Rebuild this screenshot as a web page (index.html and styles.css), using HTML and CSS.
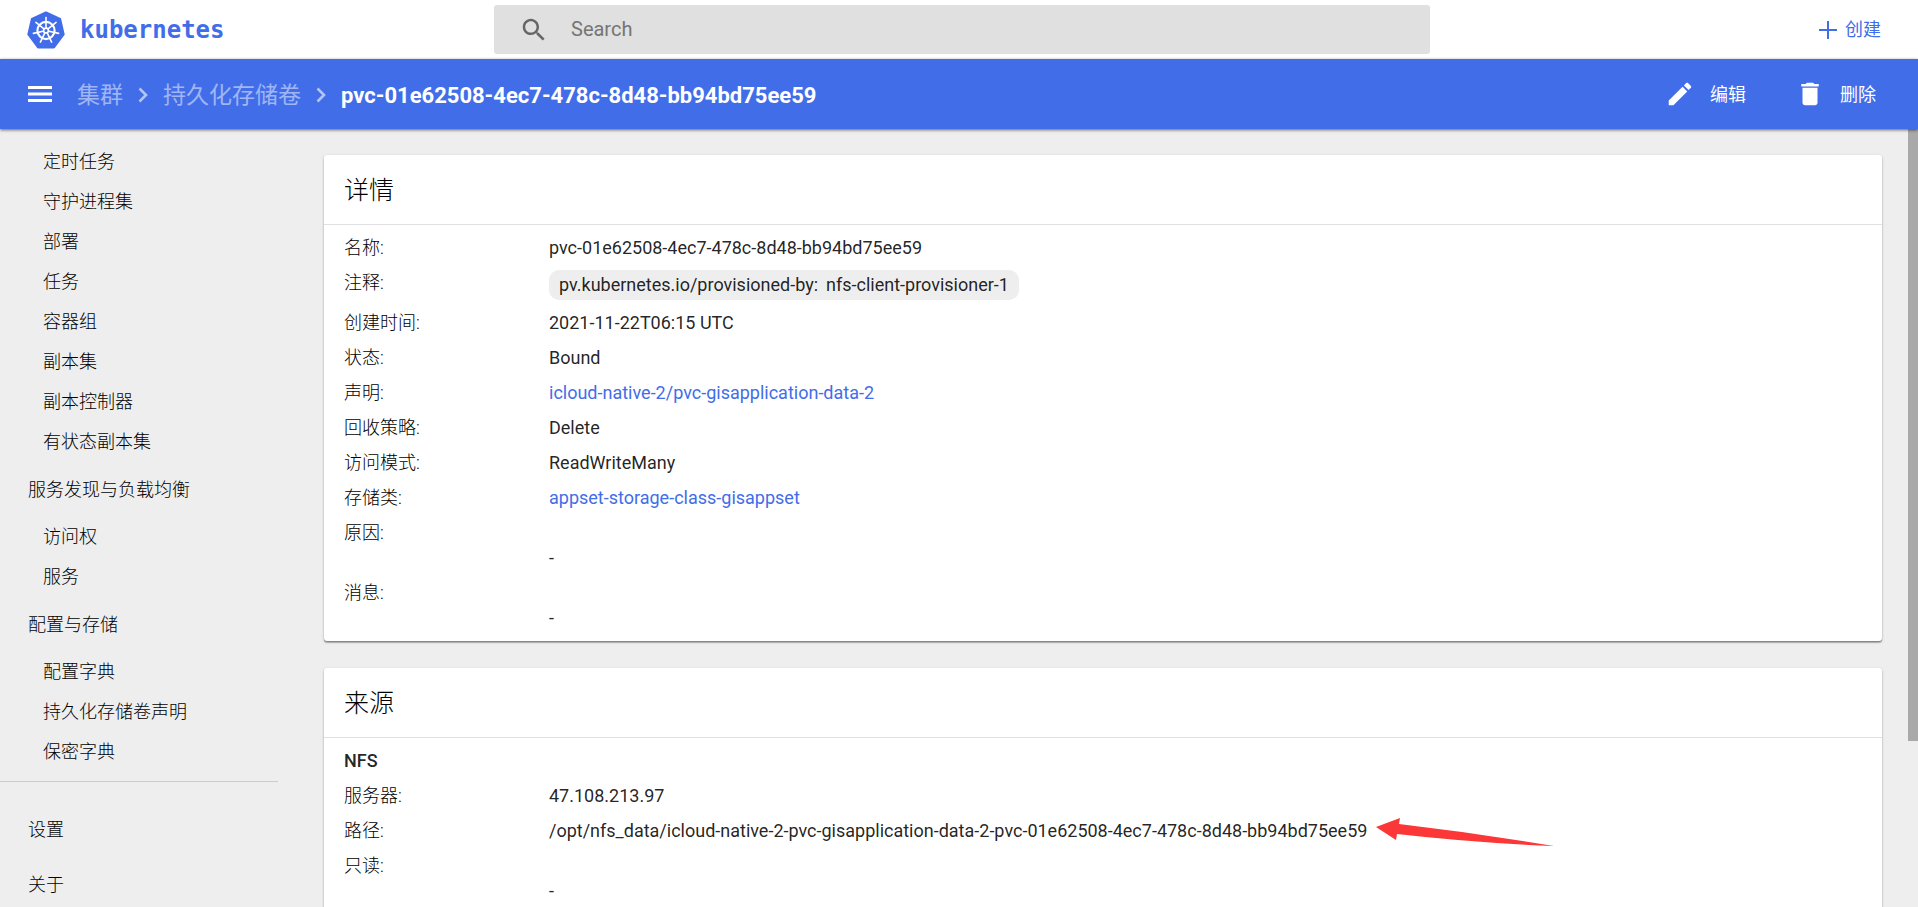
FILE: index.html
```html
<!DOCTYPE html>
<html lang="zh-CN">
<head>
<meta charset="utf-8">
<title>Kubernetes Dashboard</title>
<link rel="stylesheet" href="styles.css">
</head>
<body>
<header class="topbar">
  <a class="brand" href="#">
    <svg class="brand-logo" viewBox="0 0 38 38" aria-hidden="true">
      <path d="M19 1.5 33 8.2 36.5 23.4 26.8 36.2H11.2L1.5 23.4 5 8.2Z" fill="#426de9" stroke="#426de9" stroke-width="2.4" stroke-linejoin="round"/>
      <g fill="none" stroke="#fff" stroke-linecap="round">
        <circle cx="19" cy="19.5" r="8.6" stroke-width="2.1"/>
        <g stroke-width="1.6">
          <path id="spoke" d="M19 16.5V6.6"/>
          <use href="#spoke" transform="rotate(51.43 19 19.5)"/>
          <use href="#spoke" transform="rotate(102.86 19 19.5)"/>
          <use href="#spoke" transform="rotate(154.29 19 19.5)"/>
          <use href="#spoke" transform="rotate(205.71 19 19.5)"/>
          <use href="#spoke" transform="rotate(257.14 19 19.5)"/>
          <use href="#spoke" transform="rotate(308.57 19 19.5)"/>
        </g>
        <circle cx="19" cy="19.5" r="2.4" stroke-width="1.6"/>
      </g>
    </svg>
    <span class="brand-name">kubernetes</span>
  </a>
  <label class="search">
    <svg class="search-icon" viewBox="0 0 24 24" aria-hidden="true"><path d="M15.5 14h-.79l-.28-.27C15.41 12.59 16 11.11 16 9.5 16 5.91 13.09 3 9.5 3S3 5.91 3 9.5 5.91 16 9.5 16c1.61 0 3.09-.59 4.23-1.57l.27.28v.79l5 4.99L20.49 19l-4.99-5zm-6 0C7.01 14 5 11.99 5 9.5S7.01 5 9.5 5 14 7.01 14 9.5 11.99 14 9.5 14z"/></svg>
    <input class="search-input" type="text" placeholder="Search" aria-label="Search">
  </label>
  <button class="create" type="button">
    <svg class="create-icon" viewBox="0 0 18 18" aria-hidden="true"><path d="M8 0h2v8h8v2h-8v8H8v-8H0V8h8z"/></svg>
    创建
  </button>
</header>

<div class="toolbar">
  <button class="menu-button" type="button" aria-label="菜单">
    <svg class="menu-icon" viewBox="0 0 24 16" aria-hidden="true"><path d="M0 0h24v3H0zM0 6.5h24v3H0zM0 13h24v3H0z"/></svg>
  </button>
  <nav class="crumbs" aria-label="路径导航">
    <a class="crumb" href="#">集群</a>
    <svg class="chevron" viewBox="0 0 10 16" aria-hidden="true"><path d="M1.5 1.5 8 8l-6.5 6.5"/></svg>
    <a class="crumb" href="#">持久化存储卷</a>
    <svg class="chevron" viewBox="0 0 10 16" aria-hidden="true"><path d="M1.5 1.5 8 8l-6.5 6.5"/></svg>
    <span class="crumb-current">pvc-01e62508-4ec7-478c-8d48-bb94bd75ee59</span>
  </nav>
  <div class="actions">
    <button class="action" type="button">
      <svg class="action-icon" viewBox="0 0 24 24" aria-hidden="true"><path d="M3 17.25V21h3.75L17.81 9.94l-3.75-3.75L3 17.25zM20.71 7.04c.39-.39.39-1.02 0-1.41l-2.34-2.34c-.39-.39-1.02-.39-1.41 0l-1.83 1.83 3.75 3.75 1.83-1.83z"/></svg>
      编辑
    </button>
    <button class="action" type="button">
      <svg class="action-icon" viewBox="0 0 24 24" aria-hidden="true"><path d="M6 19c0 1.1.9 2 2 2h8c1.1 0 2-.9 2-2V7H6v12zM19 4h-3.5l-1-1h-5l-1 1H5v2h14V4z"/></svg>
      删除
    </button>
  </div>
</div>

<div class="layout">
  <nav class="sidebar" aria-label="主导航">
    <a class="nav-item" href="#">定时任务</a>
    <a class="nav-item" href="#">守护进程集</a>
    <a class="nav-item" href="#">部署</a>
    <a class="nav-item" href="#">任务</a>
    <a class="nav-item" href="#">容器组</a>
    <a class="nav-item" href="#">副本集</a>
    <a class="nav-item" href="#">副本控制器</a>
    <a class="nav-item" href="#">有状态副本集</a>
    <a class="nav-group" href="#">服务发现与负载均衡</a>
    <a class="nav-item" href="#">访问权</a>
    <a class="nav-item" href="#">服务</a>
    <a class="nav-group" href="#">配置与存储</a>
    <a class="nav-item" href="#">配置字典</a>
    <a class="nav-item" href="#">持久化存储卷声明</a>
    <a class="nav-item" href="#">保密字典</a>
    <div class="nav-footer">
      <a class="nav-group" href="#">设置</a>
      <a class="nav-group" href="#">关于</a>
    </div>
  </nav>

  <main class="content">
    <section class="card">
      <h2 class="card-title">详情</h2>
      <dl class="props">
        <div class="prop"><dt>名称:</dt><dd>pvc-01e62508-4ec7-478c-8d48-bb94bd75ee59</dd></div>
        <div class="prop"><dt>注释:</dt><dd class="chips"><span class="chip"><span>pv.kubernetes.io/provisioned-by:</span><span>nfs-client-provisioner-1</span></span></dd></div>
        <div class="prop"><dt>创建时间:</dt><dd>2021-11-22T06:15 UTC</dd></div>
        <div class="prop"><dt>状态:</dt><dd>Bound</dd></div>
        <div class="prop"><dt>声明:</dt><dd><a class="link" href="#">icloud-native-2/pvc-gisapplication-data-2</a></dd></div>
        <div class="prop"><dt>回收策略:</dt><dd>Delete</dd></div>
        <div class="prop"><dt>访问模式:</dt><dd>ReadWriteMany</dd></div>
        <div class="prop"><dt>存储类:</dt><dd><a class="link" href="#">appset-storage-class-gisappset</a></dd></div>
        <div class="prop"><dt>原因:</dt><dd class="empty">-</dd></div>
        <div class="prop"><dt>消息:</dt><dd class="empty">-</dd></div>
      </dl>
    </section>

    <section class="card">
      <h2 class="card-title">来源</h2>
      <div class="props">
        <h3 class="source-name">NFS</h3>
        <dl class="source-props">
          <div class="prop"><dt>服务器:</dt><dd>47.108.213.97</dd></div>
          <div class="prop"><dt>路径:</dt><dd><span class="marked">/opt/nfs_data/icloud-native-2-pvc-gisapplication-data-2-pvc-01e62508-4ec7-478c-8d48-bb94bd75ee59<svg class="arrow" viewBox="0 0 178 30" aria-hidden="true"><path d="M0 9 24 0 23 6Q100 15 178 28 100 25 21 16L20 22Z"/></svg></span></dd></div>
          <div class="prop"><dt>只读:</dt><dd class="empty">-</dd></div>
        </dl>
      </div>
    </section>
  </main>
  <div class="scroll-track" aria-hidden="true"><div class="scroll-thumb"></div></div>
</div>
</body>
</html>
```
FILE: styles.css
```css
* {
  box-sizing: border-box;
}

body {
  display: flex;
  flex-direction: column;
  height: 100vh;
  margin: 0;
  overflow: hidden;
  background: #eee;
  color: rgba(0, 0, 0, 0.87);
  font-family: Roboto, "Noto Sans CJK SC", sans-serif;
  font-size: 18px;
  line-height: 25px;
}

a {
  color: inherit;
  text-decoration: none;
}

button {
  padding: 0;
  border: 0;
  background: none;
  color: inherit;
  font: inherit;
}

svg {
  display: block;
  flex: none;
  fill: currentColor;
}

h2,
h3,
dl,
dd {
  margin: 0;
}

/* Top bar */
.topbar {
  display: grid;
  grid-template-columns: 467px minmax(0, 936px) 1fr;
  align-items: center;
  flex: none;
  height: 59px;
  padding: 0 37px 0 27px;
  background: #fff;
  color: #426de9;
}

.brand {
  display: flex;
  align-items: center;
  gap: 15px;
}

.brand-logo {
  width: 38px;
  height: 38px;
}

.brand-name {
  padding-top: 2px;
  font-family: "DejaVu Sans Mono", monospace;
  font-size: 24px;
  font-weight: 700;
}

.search {
  display: flex;
  align-items: center;
  gap: 22px;
  height: 49px;
  padding: 0 25px;
  border-radius: 3px;
  background: #e0e0e0;
}

.search-icon {
  width: 30px;
  height: 30px;
  color: #666;
}

.search-input {
  flex: 1;
  min-width: 0;
  padding: 0;
  border: 0;
  outline: 0;
  background: none;
  font: inherit;
  font-size: 20px;
}

.search-input::placeholder {
  color: #757575;
}

.create {
  display: flex;
  align-items: center;
  justify-self: end;
  gap: 8px;
}

.create-icon {
  width: 18px;
  height: 18px;
}

/* Toolbar */
.toolbar {
  position: relative;
  display: flex;
  align-items: center;
  flex: none;
  height: 70px;
  padding: 0 42px 0 28px;
  background: #426de9;
  box-shadow: 0 1px 3px rgba(0, 0, 0, 0.6);
  color: #fff;
}

.menu-icon {
  width: 24px;
  height: 16px;
}

.crumbs {
  display: flex;
  align-items: center;
  margin-left: 25px;
  padding-top: 2px;
  font-size: 23px;
}

.crumb {
  color: rgba(255, 255, 255, 0.5);
}

.chevron {
  width: 10px;
  height: 16px;
  margin: 0 15px;
  fill: none;
  stroke: rgba(255, 255, 255, 0.6);
  stroke-width: 2.6;
}

.crumb-current {
  font-size: 22px;
  font-weight: 700;
}

.actions {
  display: flex;
  gap: 49px;
  margin-left: auto;
}

.action {
  display: flex;
  align-items: center;
  gap: 15px;
}

.action-icon {
  width: 30px;
  height: 30px;
}

/* Page body */
.layout {
  display: flex;
  flex: 1;
  min-height: 0;
  overflow: hidden;
}

.sidebar {
  display: flex;
  flex-direction: column;
  flex: none;
  width: 278px;
  padding-top: 13px;
  color: #000;
  font-weight: 300;
}

.nav-item {
  flex: none;
  padding-left: 43px;
  line-height: 40px;
}

.nav-group {
  flex: none;
  padding-left: 28px;
  line-height: 55px;
}

.nav-footer {
  display: flex;
  flex-direction: column;
  flex: none;
  margin-top: 9px;
  padding-top: 20px;
  border-top: 1px solid #ccc;
}

.content {
  display: flex;
  flex: 1;
  flex-direction: column;
  gap: 27px;
  min-width: 0;
  padding: 26px 26px 26px 46px;
}

.scroll-track {
  flex: none;
  width: 10px;
}

.scroll-thumb {
  height: 78.7%;
  background: #a9a9a9;
}

/* Cards */
.card {
  flex: none;
  border-radius: 3px;
  background: #fff;
  box-shadow: 0 1px 3px rgba(0, 0, 0, 0.2), 0 2px 1px rgba(0, 0, 0, 0.2), 0 1px 1px rgba(0, 0, 0, 0.2);
}

.card-title {
  padding: 2px 20px 0;
  border-bottom: 1px solid #e0e0e0;
  color: #000;
  font-size: 25px;
  font-weight: 300;
  line-height: 67px;
}

.props {
  padding: 5px 20px 6px;
}

.prop {
  display: grid;
  grid-template-columns: 205px minmax(0, 1fr);
  padding: 5px 0;
}

dt {
  color: #000;
  font-weight: 300;
}

.empty {
  grid-row: 2;
  grid-column: 2;
}

.chips {
  display: flex;
}

.chip {
  display: flex;
  gap: 8px;
  padding: 0 10px;
  border-radius: 10px;
  background: #eee;
  line-height: 30px;
}

.link {
  color: #426de9;
}

.source-name {
  padding: 5px 0;
  font-size: 18px;
  font-weight: 500;
}

.marked {
  position: relative;
}

.arrow {
  position: absolute;
  top: -2px;
  left: 100%;
  width: 178px;
  height: 30px;
  margin-left: 9px;
  fill: #fc3737;
}
```
